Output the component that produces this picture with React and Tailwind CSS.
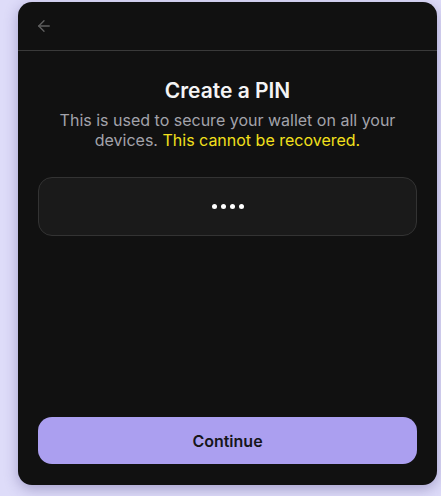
import React, { useState } from 'react';
import { ArrowLeft } from 'lucide-react';

const App = () => {
  const [pin] = useState('1234');

  return (
    <div
      className="w-[441px] h-[496px] bg-[#dedcf9] pt-[2px] pl-[18px]"
      style={{ fontFamily: 'Inter, "Noto Sans", sans-serif' }}
    >
      <div className="w-[419px] h-[483px] bg-[#111111] rounded-[14px] shadow-[0_4px_14px_rgba(60,50,120,0.35)] flex flex-col overflow-hidden">
        <div className="h-[49px] shrink-0 flex items-center pl-[17px] border-b border-[#3a3a3a]">
          <ArrowLeft className="w-[18px] h-[18px] text-[#5f5f5f]" strokeWidth={1.8} />
        </div>

        <div className="flex-1 flex flex-col px-[20px] pt-[26px] pb-[21px]">
          <h1 className="text-center text-[21px] leading-[28px] font-semibold text-[#f4f4f5]">
            Create a PIN
          </h1>
          <p className="mt-[5px] text-center text-[16px] leading-[20px] text-[#a3a3ab]">
            This is used to secure your wallet on all your devices.{' '}
            <span className="text-[#f3e01c]">This cannot be recovered.</span>
          </p>

          <div className="mt-[27px] h-[59px] rounded-[14px] bg-[#1a1a1a] border border-[#333333] flex items-center justify-center gap-[4px]">
            {pin.split('').map((_, i) => (
              <span key={i} className="w-[5px] h-[5px] rounded-full bg-white" />
            ))}
          </div>

          <div className="flex-1" />

          <button className="h-[47px] w-full rounded-[14px] bg-[#ab9ff0] text-[#16161a] text-[16px] font-semibold">
            Continue
          </button>
        </div>
      </div>
    </div>
  );
};

export default App;
